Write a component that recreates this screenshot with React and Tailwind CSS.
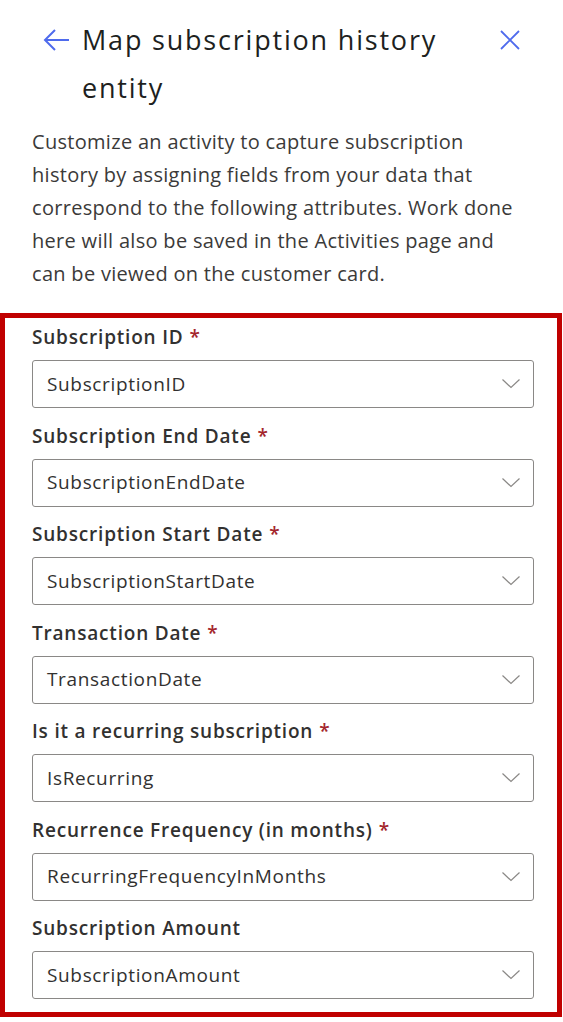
const fields = [
  { label: "Subscription ID", value: "SubscriptionID", required: true },
  { label: "Subscription End Date", value: "SubscriptionEndDate", required: true },
  { label: "Subscription Start Date", value: "SubscriptionStartDate", required: true },
  { label: "Transaction Date", value: "TransactionDate", required: true },
  { label: "Is it a recurring subscription", value: "IsRecurring", required: true },
  { label: "Recurrence Frequency (in months)", value: "RecurringFrequencyInMonths", required: true },
  { label: "Subscription Amount", value: "SubscriptionAmount", required: false },
];

function ChevronDown() {
  return (
    <svg width="20" height="12" viewBox="0 0 20 12" fill="none">
      <path d="M1.5 1.5 L10 9.5 L18.5 1.5" stroke="#8a8886" strokeWidth="1.2" />
    </svg>
  );
}

function Field({ label, value, required }) {
  return (
    <div>
      <div className="mb-[9px] text-[19px] leading-[28px] font-semibold tracking-[0.8px] text-[#323130]">
        {label}
        {required ? <span className="ml-[6px] text-[#a4262c]">*</span> : null}
      </div>
      <div className="flex h-[48px] items-center justify-between rounded-[3px] border border-[#8a8886] pl-[14px] pr-[12px]">
        <span className="text-[19px] tracking-[0.65px] text-[#323130]">{value}</span>
        <ChevronDown />
      </div>
    </div>
  );
}

export default function App() {
  return (
    <div
      className="min-h-[1022px] w-[563px] bg-white"
      style={{ fontFamily: '"Open Sans", "Noto Sans", sans-serif' }}
    >
      <div className="flex items-start pt-[16px]">
        <button className="ml-[42px] mt-[12px] w-[28px] text-[#4f6bed]">
          <svg width="28" height="24" viewBox="0 0 28 24" fill="none">
            <path d="M13 3 L3 13 L13 23 M3 13 H27" stroke="#4f6bed" strokeWidth="2" transform="translate(0,-1)" />
          </svg>
        </button>
        <h1 className="ml-[12px] w-[380px] text-[27px] leading-[48px] font-medium tracking-[1.8px] text-[#201f1e]">
          Map subscription history entity
        </h1>
        <button className="ml-[38px] mt-[14px]">
          <svg width="20" height="20" viewBox="0 0 20 20" fill="none">
            <path d="M1 1 L19 19 M19 1 L1 19" stroke="#4f6bed" strokeWidth="1.8" />
          </svg>
        </button>
      </div>

      <p className="mt-[13px] w-[530px] pl-[32px] text-[20px] leading-[33px] tracking-[0.3px] text-[#3b3a39]">
        Customize an activity to capture subscription history by assigning fields from your data that
        correspond to the following attributes. Work done here will also be saved in the Activities page
        and can be viewed on the customer card.
      </p>

      <div className="mt-[23px] mr-[1px] border-[5px] border-[#c00000] pb-[13px] pl-[27px] pr-[23px] pt-[5px]">
        <div className="flex flex-col gap-y-[13.5px]">
          {fields.map((field) => (
            <Field key={field.label} {...field} />
          ))}
        </div>
      </div>
    </div>
  );
}
